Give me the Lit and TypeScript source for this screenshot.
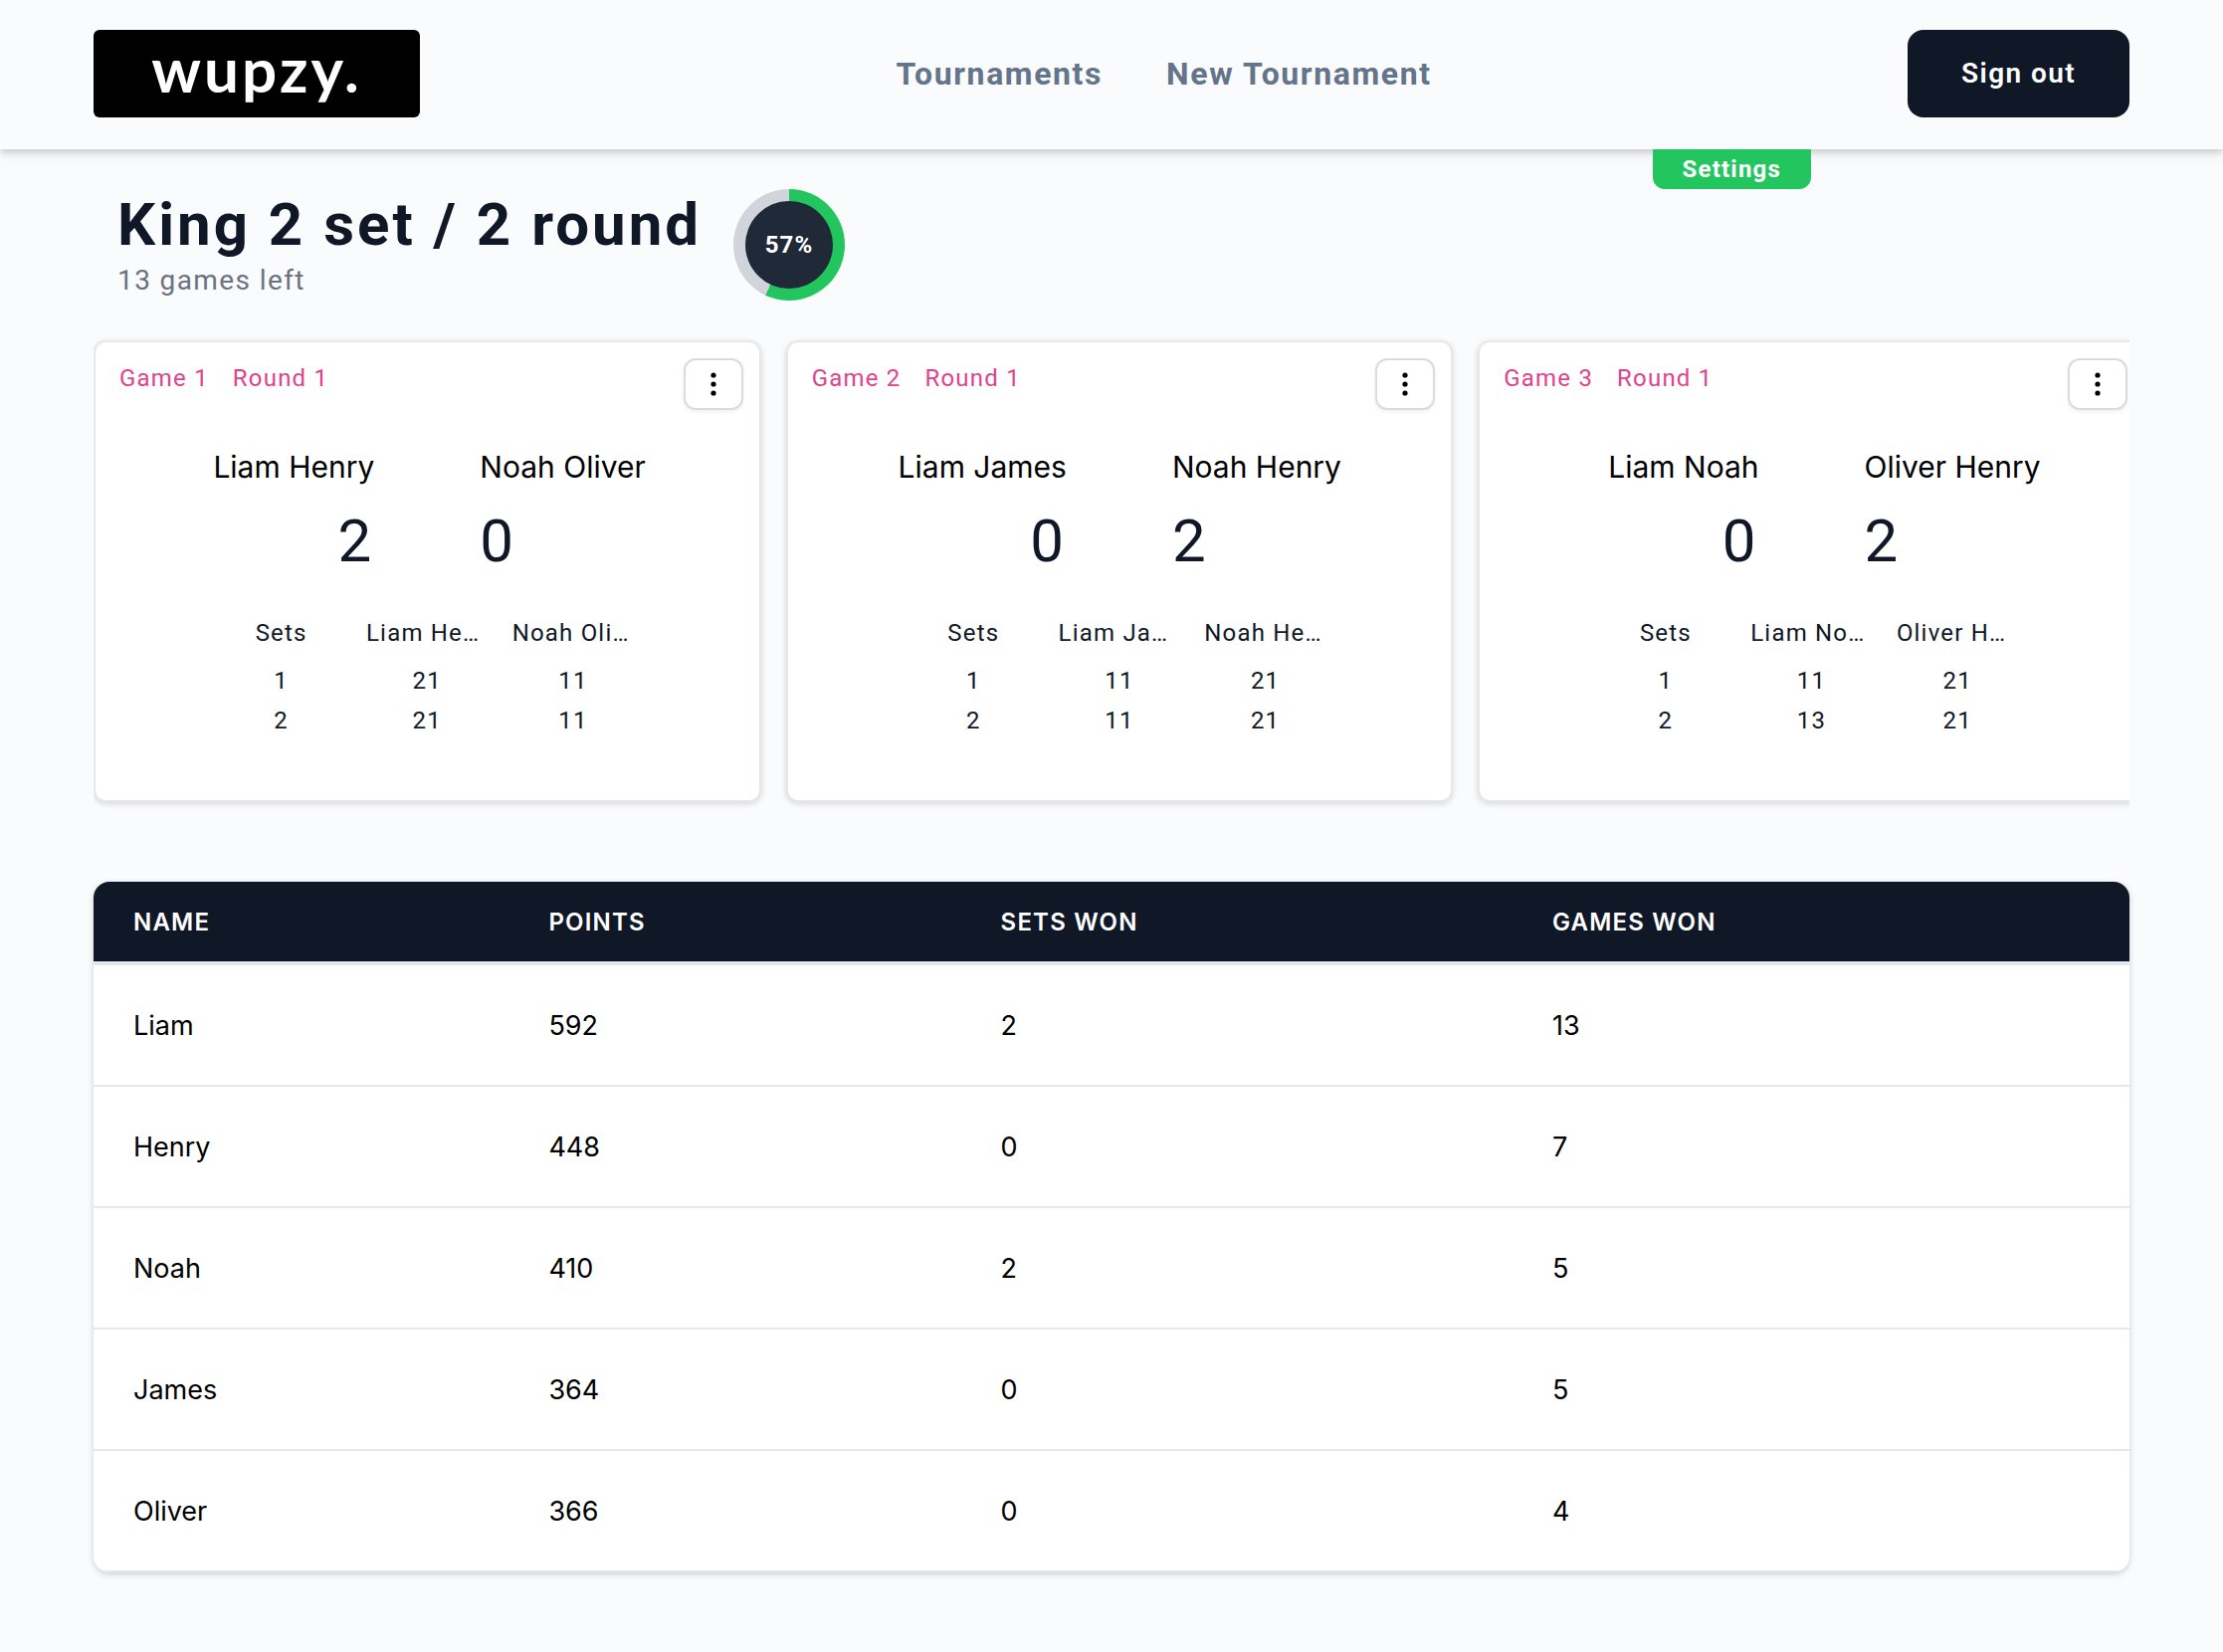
import { LitElement, html, css } from "lit";
import { customElement, property } from "lit/decorators.js";

interface Game {
  id: number;
  round: number;
  home: string;
  away: string;
  score: [number, number];
  sets: [number, number][];
}

const GAMES: Game[] = [
  { id: 1, round: 1, home: "Liam Henry", away: "Noah Oliver", score: [2, 0], sets: [[21, 11], [21, 11]] },
  { id: 2, round: 1, home: "Liam James", away: "Noah Henry", score: [0, 2], sets: [[11, 21], [11, 21]] },
  { id: 3, round: 1, home: "Liam Noah", away: "Oliver Henry", score: [0, 2], sets: [[11, 21], [13, 21]] },
];

const STANDINGS: [string, number, number, number][] = [
  ["Liam", 592, 2, 13],
  ["Henry", 448, 0, 7],
  ["Noah", 410, 2, 5],
  ["James", 364, 0, 5],
  ["Oliver", 366, 0, 4],
];

@customElement("site-header")
class SiteHeader extends LitElement {
  static styles = css`
    :host {
      display: block;
      font-family: Roboto, sans-serif;
    }
    .bar {
      display: flex;
      justify-content: space-between;
      align-items: center;
      padding: 30px 94px 32px;
      background: #fafbfd;
      box-shadow: 0 4px 6px rgba(0, 0, 0, 0.14), 0 8px 12px rgba(0, 0, 0, 0.04);
    }
    .logo {
      display: flex;
      align-items: center;
      justify-content: center;
      width: 328px;
      height: 88px;
      border-radius: 6px;
      background: #000;
      color: #fff;
      font: 700 62px/72px Lato, sans-serif;
      letter-spacing: 0.05em;
      padding-bottom: 10px;
      box-sizing: border-box;
      text-decoration: none;
    }
    .links {
      display: flex;
      gap: 64px;
    }
    .link {
      font-size: 32px;
      line-height: 48px;
      font-weight: 700;
      letter-spacing: 0.05em;
      color: #64748b;
      text-decoration: none;
    }
    .sign-out {
      height: 88px;
      padding: 0 54px;
      border: 0;
      border-radius: 16px;
      background: #101827;
      color: #fff;
      font: 600 28px/40px Roboto, sans-serif;
      letter-spacing: 0.05em;
    }
  `;

  render() {
    return html`
      <header class="bar">
        <a class="logo" href="#">wupzy.</a>
        <nav class="links">
          <a class="link" href="#tournaments">Tournaments</a>
          <a class="link" href="#new">New Tournament</a>
        </nav>
        <button class="sign-out" type="button">Sign out</button>
      </header>
    `;
  }
}

@customElement("progress-ring")
class ProgressRing extends LitElement {
  @property({ type: Number }) value = 0;

  static styles = css`
    :host {
      display: block;
    }
    .ring {
      display: grid;
      place-items: center;
      width: 112px;
      height: 112px;
      border-radius: 50%;
    }
    .core {
      display: grid;
      place-items: center;
      width: 88px;
      height: 88px;
      border-radius: 50%;
      background: #1f2937;
      color: #fff;
      font: 700 24px/32px Roboto, sans-serif;
      letter-spacing: 0.05em;
    }
  `;

  render() {
    return html`
      <div class="ring" style="background: conic-gradient(#22c55e ${this.value}%, #d1d5db 0)">
        <div class="core">${this.value}%</div>
      </div>
    `;
  }
}

@customElement("game-card")
class GameCard extends LitElement {
  @property({ attribute: false }) game!: Game;

  static styles = css`
    :host {
      display: block;
      box-sizing: border-box;
      min-height: 464px;
      border: 2px solid #e5e7eb;
      border-radius: 12px;
      background: #fff;
      color: #101827;
      font-family: Roboto, sans-serif;
      box-shadow: 0 2px 6px rgba(0, 0, 0, 0.14);
    }
    .top {
      display: flex;
      justify-content: space-between;
      align-items: flex-start;
      padding: 16px 16px 0 24px;
    }
    .tags {
      display: flex;
      gap: 24px;
      font-size: 24px;
      line-height: 40px;
      letter-spacing: 0.05em;
      color: #e0438c;
    }
    .menu {
      display: grid;
      place-items: center;
      width: 60px;
      height: 52px;
      padding: 0;
      border: 2px solid #d9dbdf;
      border-radius: 12px;
      background: #fff;
      box-shadow: 0 2px 4px rgba(0, 0, 0, 0.06);
    }
    .match {
      display: grid;
      grid-template-columns: 1fr 1fr;
      column-gap: 106px;
      padding: 33px 64px 0;
    }
    .home {
      text-align: right;
    }
    .player {
      font-family: Inter, sans-serif;
      font-size: 30px;
      line-height: 48px;
      color: #000;
      white-space: nowrap;
    }
    .score {
      font-size: 60px;
      line-height: 72px;
      letter-spacing: 0.05em;
      padding-top: 15px;
    }
    .sets {
      margin: 36px auto 0;
      border-collapse: collapse;
      table-layout: fixed;
      width: 440px;
      font-size: 24px;
      letter-spacing: 0.05em;
      text-align: center;
    }
    .sets th {
      padding: 0 12px 8px;
      font-weight: 400;
      line-height: 40px;
      overflow: hidden;
      text-overflow: ellipsis;
      white-space: nowrap;
    }
    .sets td {
      padding: 0;
      line-height: 40px;
    }
  `;

  render() {
    const g = this.game;
    return html`
      <div class="top">
        <div class="tags"><span>Game ${g.id}</span><span>Round ${g.round}</span></div>
        <button class="menu" type="button" aria-label="Game options">
          <svg width="8" height="26" viewBox="0 0 8 26" fill="#000" aria-hidden="true">
            <circle cx="4" cy="4" r="2.6" />
            <circle cx="4" cy="13" r="2.6" />
            <circle cx="4" cy="22" r="2.6" />
          </svg>
        </button>
      </div>
      <div class="match">
        <div class="player home">${g.home}</div>
        <div class="player">${g.away}</div>
        <div class="score home">${g.score[0]}</div>
        <div class="score">${g.score[1]}</div>
      </div>
      <table class="sets">
        <thead>
          <tr><th>Sets</th><th>${g.home}</th><th>${g.away}</th></tr>
        </thead>
        <tbody>
          ${g.sets.map((s, i) => html`<tr><td>${i + 1}</td><td>${s[0]}</td><td>${s[1]}</td></tr>`)}
        </tbody>
      </table>
    `;
  }
}

@customElement("standings-table")
class StandingsTable extends LitElement {
  static styles = css`
    :host {
      display: block;
      border-radius: 16px;
      overflow: hidden;
      background: #fff;
      box-shadow: 0 2px 6px rgba(0, 0, 0, 0.18);
      font-family: Inter, sans-serif;
    }
    .grid {
      width: 100%;
      border-collapse: separate;
      border-spacing: 0;
      table-layout: fixed;
      text-align: left;
    }
    .grid th {
      box-sizing: border-box;
      padding: 21px 40px 19px;
      background: #101827;
      border-bottom: 4px solid #e2e8f0;
      color: #fff;
      font-size: 24px;
      line-height: 40px;
      font-weight: 600;
      letter-spacing: 0.05em;
      text-transform: uppercase;
    }
    .grid .name { width: 20.4%; }
    .grid .points { width: 22.2%; }
    .grid .sets { width: 27.1%; }
    .grid td {
      padding: 41px 40px 39px;
      border-bottom: 2px solid #e5e7eb;
      font-size: 27px;
      line-height: 40px;
      color: #000;
    }
  `;

  render() {
    return html`
      <table class="grid">
        <thead>
          <tr>
            <th class="name">Name</th>
            <th class="points">Points</th>
            <th class="sets">Sets won</th>
            <th>Games won</th>
          </tr>
        </thead>
        <tbody>
          ${STANDINGS.map((row) => html`<tr>${row.map((cell) => html`<td>${cell}</td>`)}</tr>`)}
        </tbody>
      </table>
    `;
  }
}

@customElement("app-root")
class AppRoot extends LitElement {
  static styles = css`
    :host {
      display: block;
      min-height: 100vh;
      background: #fafbfd;
      font-family: Roboto, sans-serif;
    }
    .main {
      padding: 0 94px 80px;
    }
    .intro {
      display: flex;
      justify-content: space-between;
      align-items: flex-start;
      padding-left: 24px;
    }
    .heading {
      display: flex;
      gap: 32px;
      padding-top: 40px;
    }
    .title {
      margin: 0;
      font-size: 60px;
      line-height: 72px;
      font-weight: 700;
      letter-spacing: 0.05em;
      color: #101827;
    }
    .left {
      margin: 0;
      font-size: 28px;
      line-height: 40px;
      letter-spacing: 0.05em;
      color: #6b7280;
    }
    .settings {
      height: 40px;
      padding: 0 30px;
      margin-right: 320px;
      border: 0;
      border-radius: 0 0 12px 12px;
      background: #22c55e;
      color: #fff;
      font: 700 24px/40px Roboto, sans-serif;
      letter-spacing: 0.05em;
    }
    .carousel {
      display: flex;
      overflow: hidden;
      margin-top: 32px;
      padding: 8px 0 16px;
    }
    .slide {
      flex: 0 0 34%;
      box-sizing: border-box;
      padding-right: 25px;
    }
    .standings {
      margin-top: 64px;
    }
  `;

  render() {
    return html`
      <site-header></site-header>
      <main class="main">
        <div class="intro">
          <div class="heading">
            <div>
              <h1 class="title">King 2 set / 2 round</h1>
              <p class="left">13 games left</p>
            </div>
            <progress-ring .value=${57}></progress-ring>
          </div>
          <button class="settings" type="button">Settings</button>
        </div>
        <div class="carousel">
          ${GAMES.map((g) => html`<div class="slide"><game-card .game=${g}></game-card></div>`)}
        </div>
        <standings-table class="standings"></standings-table>
      </main>
    `;
  }
}
